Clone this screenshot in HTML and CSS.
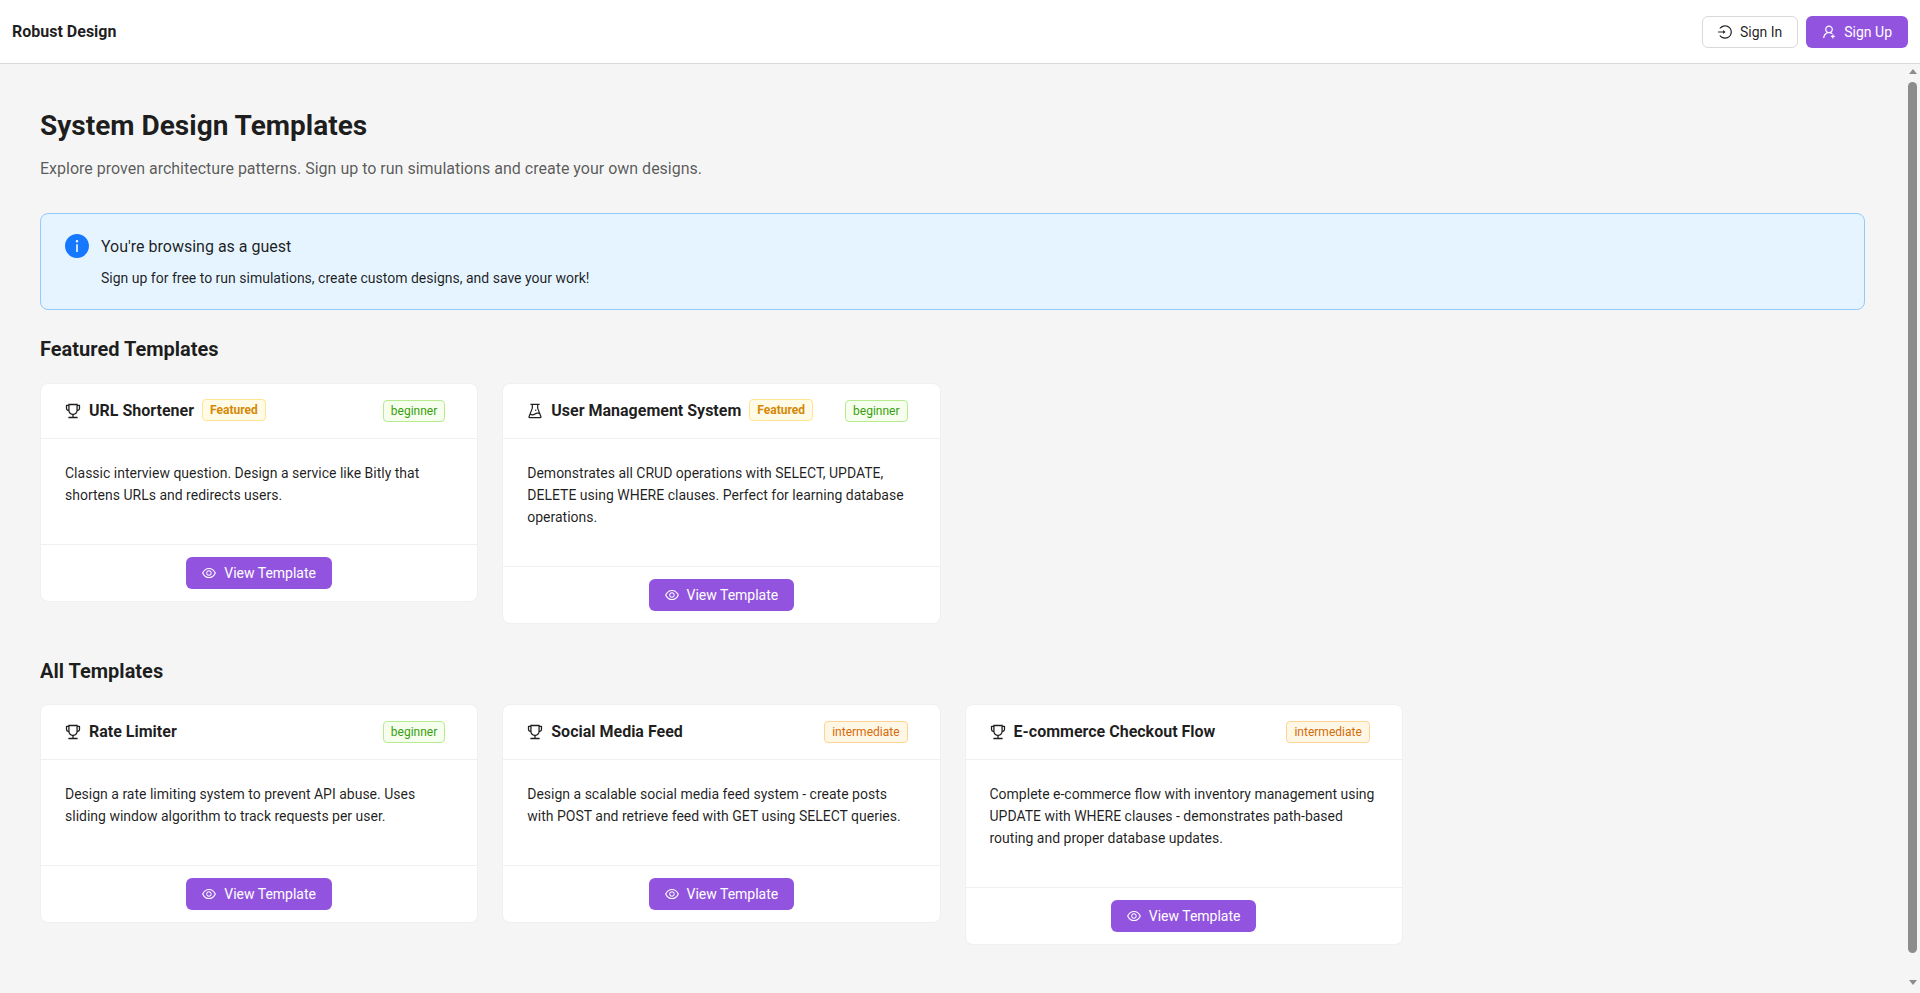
FILE: index.html
```html
<!DOCTYPE html>
<html lang="en">
<head>
<meta charset="utf-8">
<title>Robust Design</title>
<link rel="stylesheet" href="styles.css">
</head>
<body>
<svg class="sprite" aria-hidden="true">
  <symbol id="i-trophy" viewBox="64 64 896 896"><path d="M868 160h-92v-40c0-4.4-3.6-8-8-8H256c-4.4 0-8 3.6-8 8v40h-92a44 44 0 00-44 44v148c0 81.7 60 149.6 138.2 162C265.7 630.2 359 721.7 476 734.5v105.2H280c-17.7 0-32 14.3-32 32V904c0 4.4 3.6 8 8 8h512c4.4 0 8-3.6 8-8v-32.3c0-17.7-14.3-32-32-32H548V734.5C665 721.7 758.3 630.2 773.8 514 852 501.6 912 433.7 912 352V204a44 44 0 00-44-44zM184 352V232h64v207.6a91.99 91.99 0 01-64-87.6zm520 128c0 49.1-19.1 95.4-53.9 130.1-34.8 34.8-81 53.9-130.1 53.9h-16c-49.1 0-95.4-19.1-130.1-53.9-34.8-34.8-53.9-81-53.9-130.1V184h384v296zm136-128c0 41-26.9 75.8-64 87.6V232h64v120z"/></symbol>
  <symbol id="i-eye" viewBox="64 64 896 896"><path d="M942.2 486.2C847.4 286.5 704.1 186 512 186c-192.2 0-335.4 100.5-430.2 300.3a60.3 60.3 0 000 51.5C176.6 737.5 319.9 838 512 838c192.2 0 335.4-100.5 430.2-300.3 7.7-16.2 7.7-35 0-51.5zM512 766c-161.3 0-279.4-81.8-362.7-254C232.6 339.8 350.7 258 512 258c161.3 0 279.4 81.8 362.7 254C791.5 684.2 673.4 766 512 766zm-4-430c-97.2 0-176 78.8-176 176s78.8 176 176 176 176-78.8 176-176-78.8-176-176-176zm0 288c-61.9 0-112-50.1-112-112s50.1-112 112-112 112 50.1 112 112-50.1 112-112 112z"/></symbol>
  <symbol id="i-flask" viewBox="64 64 896 896"><path d="M512 472a40 40 0 1080 0 40 40 0 10-80 0zm367 352.9L696.3 352V178H768v-68H256v68h71.7v174L145 824.9c-2.8 7.4-4.3 15.2-4.3 23.1 0 35.3 28.7 64 64 64h614.6c7.9 0 15.7-1.5 23.1-4.3 33-12.7 49.4-49.8 36.6-82.8zM395.7 364.7V180h232.6v184.7L719.2 600c-20.7-5.3-42.1-8-63.9-8-61.2 0-119.2 21.5-165.3 60a188.78 188.78 0 01-121.3 43.9c-32.7 0-64.1-8.3-91.8-23.7l118.8-307.5zM210.5 844l41.7-107.8c35.7 18.1 75.4 27.8 116.6 27.8 61.2 0 119.2-21.5 165.3-60 33.9-28.2 76.3-43.9 121.3-43.9 35 0 68.4 9.5 97.6 27.1L813.5 844h-603z"/></symbol>
  <symbol id="i-login" viewBox="64 64 896 896"><path d="M521.7 82c-152.5-.4-286.7 78.5-363.4 197.7-3.4 5.3.4 12.3 6.7 12.3h70.3c4.8 0 9.3-2.1 12.3-5.8 7-8.5 14.5-16.7 22.4-24.5 32.6-32.5 70.5-58.1 112.7-75.9 43.6-18.4 90-27.8 137.9-27.8 47.9 0 94.3 9.3 137.9 27.8 42.2 17.8 80.1 43.4 112.7 75.9 32.6 32.5 58.1 70.4 76 112.5C865.7 417.8 875 464.1 875 512c0 47.9-9.4 94.2-27.8 137.8-17.8 42.1-43.4 80-76 112.5s-70.5 58.1-112.7 75.9A352.8 352.8 0 01520.6 866c-47.9 0-94.3-9.4-137.9-27.8A353.84 353.84 0 01270 762.3c-7.9-7.9-15.3-16.1-22.4-24.5-3-3.7-7.6-5.8-12.3-5.8H165c-6.3 0-10.2 7-6.7 12.3C234.9 863.2 368.5 942 520.6 942c236.2 0 428-190.1 430.4-425.6C953.4 277.1 761.3 82.6 521.7 82zM395.02 624v-76h-314c-4.4 0-8-3.6-8-8v-56c0-4.4 3.6-8 8-8h314v-76c0-6.7 7.8-10.5 13-6.3l141.9 112a8 8 0 010 12.6l-141.9 112c-5.2 4.1-13 .4-13-6.3z"/></symbol>
  <symbol id="i-useradd" viewBox="64 64 896 896"><path d="M678.3 642.4c24.5-13.2 52.5-20.7 82.3-20.7h.1c3 0 4.4-3.6 2.2-5.6a371.67 371.67 0 00-103.7-65.8c-.4-.2-.8-.3-1.2-.5C719.2 505 759.6 431.7 759.6 349c0-137-110.8-248-247.5-248S264.7 212 264.7 349c0 82.7 40.4 156 102.6 201.1-.4.2-.8.3-1.2.5-44.7 18.9-84.8 46-119.3 80.6a373.42 373.42 0 00-80.4 119.5A373.6 373.6 0 00137 888.8a8 8 0 008 8.2h59.9c4.3 0 7.9-3.5 8-7.8 2-77.2 32.9-149.5 87.6-204.3C357 628.2 432.2 597 512.2 597c56.7 0 111.1 15.7 158 45.1a8.1 8.1 0 008.1.3zM512.2 521c-45.8 0-88.9-17.9-121.4-50.4A171.2 171.2 0 01340.5 349c0-45.9 17.9-89.1 50.3-121.6S466.3 177 512.2 177s88.9 17.9 121.4 50.4A171.2 171.2 0 01683.9 349c0 45.9-17.9 89.1-50.3 121.6C601.1 503.1 558 521 512.2 521zM880 759h-84v-84c0-4.4-3.6-8-8-8h-56c-4.4 0-8 3.6-8 8v84h-84c-4.4 0-8 3.6-8 8v56c0 4.4 3.6 8 8 8h84v84c0 4.4 3.6 8 8 8h56c4.4 0 8-3.6 8-8v-84h84c4.4 0 8-3.6 8-8v-56c0-4.4-3.6-8-8-8z"/></symbol>
  <symbol id="i-info" viewBox="64 64 896 896"><path d="M512 64C264.6 64 64 264.6 64 512s200.6 448 448 448 448-200.6 448-448S759.4 64 512 64zm32 664c0 4.4-3.6 8-8 8h-48c-4.4 0-8-3.6-8-8V456c0-4.4 3.6-8 8-8h48c4.4 0 8 3.6 8 8v272zm-32-344a48.01 48.01 0 010-96 48.01 48.01 0 010 96z"/></symbol>
</svg>

<header class="topbar">
  <div class="brand">Robust Design</div>
  <nav class="auth">
    <a class="btn btn-default"><svg class="icon"><use href="#i-login"/></svg>Sign In</a>
    <a class="btn btn-primary"><svg class="icon"><use href="#i-useradd"/></svg>Sign Up</a>
  </nav>
</header>

<div class="viewport">
  <main class="content">
    <h1 class="page-title">System Design Templates</h1>
    <p class="page-sub">Explore proven architecture patterns. Sign up to run simulations and create your own designs.</p>

    <section class="alert">
      <svg class="alert-icon"><use href="#i-info"/></svg>
      <div class="alert-text">
        <div class="alert-title">You're browsing as a guest</div>
        <div class="alert-desc">Sign up for free to run simulations, create custom designs, and save your work!</div>
      </div>
    </section>

    <h2 class="section-title">Featured Templates</h2>
    <div class="grid grid-featured">
      <article class="card">
        <div class="card-head">
          <svg class="icon icon-title"><use href="#i-trophy"/></svg>
          <span class="card-title">URL Shortener</span>
          <span class="tag tag-featured">Featured</span>
          <span class="tag tag-beginner">beginner</span>
        </div>
        <div class="card-body"><p>Classic interview question. Design a service like Bitly that shortens URLs and redirects users.</p></div>
        <div class="card-foot"><a class="btn btn-primary"><svg class="icon"><use href="#i-eye"/></svg>View Template</a></div>
      </article>
      <article class="card">
        <div class="card-head">
          <svg class="icon icon-title"><use href="#i-flask"/></svg>
          <span class="card-title">User Management System</span>
          <span class="tag tag-featured">Featured</span>
          <span class="tag tag-beginner">beginner</span>
        </div>
        <div class="card-body"><p>Demonstrates all CRUD operations with SELECT, UPDATE, DELETE using WHERE clauses. Perfect for learning database operations.</p></div>
        <div class="card-foot"><a class="btn btn-primary"><svg class="icon"><use href="#i-eye"/></svg>View Template</a></div>
      </article>
    </div>

    <h2 class="section-title section-title-all">All Templates</h2>
    <div class="grid">
      <article class="card">
        <div class="card-head">
          <svg class="icon icon-title"><use href="#i-trophy"/></svg>
          <span class="card-title">Rate Limiter</span>
          <span class="tag tag-beginner">beginner</span>
        </div>
        <div class="card-body"><p>Design a rate limiting system to prevent API abuse. Uses sliding window algorithm to track requests per user.</p></div>
        <div class="card-foot"><a class="btn btn-primary"><svg class="icon"><use href="#i-eye"/></svg>View Template</a></div>
      </article>
      <article class="card">
        <div class="card-head">
          <svg class="icon icon-title"><use href="#i-trophy"/></svg>
          <span class="card-title">Social Media Feed</span>
          <span class="tag tag-intermediate">intermediate</span>
        </div>
        <div class="card-body"><p>Design a scalable social media feed system - create posts with POST and retrieve feed with GET using SELECT queries.</p></div>
        <div class="card-foot"><a class="btn btn-primary"><svg class="icon"><use href="#i-eye"/></svg>View Template</a></div>
      </article>
      <article class="card">
        <div class="card-head">
          <svg class="icon icon-title"><use href="#i-trophy"/></svg>
          <span class="card-title">E-commerce Checkout Flow</span>
          <span class="tag tag-intermediate">intermediate</span>
        </div>
        <div class="card-body"><p>Complete e-commerce flow with inventory management using UPDATE with WHERE clauses - demonstrates path-based routing and proper database updates.</p></div>
        <div class="card-foot"><a class="btn btn-primary"><svg class="icon"><use href="#i-eye"/></svg>View Template</a></div>
      </article>
    </div>
  </main>

  <div class="scrollbar" aria-hidden="true">
    <span class="scroll-arrow scroll-arrow-up"></span>
    <span class="scroll-thumb"></span>
    <span class="scroll-arrow scroll-arrow-down"></span>
  </div>
</div>
</body>
</html>
```

FILE: styles.css
```css
* { box-sizing: border-box; }

html, body {
  height: 100%;
  margin: 0;
  overflow: hidden;
}

body {
  display: flex;
  flex-direction: column;
  font-family: Roboto, "Liberation Sans", sans-serif;
  font-size: 14px;
  line-height: 22px;
  color: rgba(0, 0, 0, 0.88);
  background: #f5f5f5;
}

.sprite { display: none; }

.icon {
  width: 14px;
  height: 14px;
  fill: currentColor;
  flex: none;
}

.topbar {
  flex: none;
  height: 64px;
  display: flex;
  align-items: center;
  justify-content: space-between;
  padding: 0 12px;
  background: #fff;
  border-bottom: 1px solid #d9d9d9;
}

.brand {
  font-size: 16px;
  font-weight: 700;
}

.auth {
  display: flex;
  gap: 8px;
}

.btn {
  display: inline-flex;
  align-items: center;
  gap: 8px;
  height: 32px;
  padding: 0 15px;
  border: 1px solid transparent;
  border-radius: 6px;
  white-space: nowrap;
}

.btn-default {
  background: #fff;
  border-color: #d9d9d9;
  color: rgba(0, 0, 0, 0.88);
}

.btn-primary {
  background: #9254de;
  color: #fff;
}

.viewport {
  flex: 1;
  min-height: 0;
  display: flex;
}

.content {
  flex: 1;
  min-width: 0;
  overflow: hidden;
  padding: 44px 40px 0;
}

.page-title {
  margin: 0 0 13px;
  font-size: 28px;
  line-height: 36px;
  font-weight: 700;
}

.page-sub {
  margin: 0 0 32px;
  font-size: 16px;
  line-height: 24px;
  color: rgba(0, 0, 0, 0.65);
}

.alert {
  display: flex;
  gap: 12px;
  padding: 20px 24px;
  margin-bottom: 25px;
  background: #e6f4ff;
  border: 1px solid #91caff;
  border-radius: 8px;
}

.alert-icon {
  width: 24px;
  height: 24px;
  fill: #1677ff;
  flex: none;
}

.alert-text {
  padding-top: 1px;
}

.alert-title {
  font-size: 16px;
  line-height: 24px;
  margin-bottom: 8px;
}

.section-title {
  margin: 0 0 20px;
  font-size: 20px;
  line-height: 28px;
  font-weight: 700;
}

.section-title-all {
  margin-bottom: 19px;
}

.grid {
  display: grid;
  grid-template-columns: repeat(4, 1fr);
  gap: 24px;
  align-items: start;
}

.grid-featured {
  margin-bottom: 33px;
}

.card {
  background: #fff;
  border: 1px solid #f0f0f0;
  border-radius: 8px;
}

.card-head {
  display: flex;
  align-items: center;
  height: 55px;
  padding: 0 24px;
  border-bottom: 1px solid #f0f0f0;
}

.icon-title {
  width: 16px;
  height: 16px;
  margin-right: 8px;
}

.card-title {
  font-size: 16px;
  font-weight: 700;
  white-space: nowrap;
}

.tag {
  height: 22px;
  padding: 0 7px;
  border: 1px solid;
  border-radius: 4px;
  font-size: 12px;
  line-height: 20px;
  white-space: nowrap;
}

.tag-featured {
  margin: -2px 0 0 8px;
  font-weight: 700;
  color: #d48806;
  background: #fffbe6;
  border-color: #ffe58f;
}

.tag-beginner,
.tag-intermediate {
  margin-left: auto;
  margin-right: 8px;
}

.tag-beginner {
  color: #389e0d;
  background: #f6ffed;
  border-color: #b7eb8f;
}

.tag-intermediate {
  color: #d46b08;
  background: #fff7e6;
  border-color: #ffd591;
}

.card-body {
  padding: 23px 24px 24px;
}

.card-body p {
  margin: 0 0 14px;
}

.card-foot {
  display: flex;
  justify-content: center;
  padding: 12px 0;
  border-top: 1px solid #f0f0f0;
}

.scrollbar {
  flex: none;
  width: 15px;
  display: flex;
  flex-direction: column;
  align-items: center;
  background: #f5f5f5;
}

.scroll-arrow {
  flex: none;
  width: 0;
  height: 0;
  border-left: 4.5px solid transparent;
  border-right: 4.5px solid transparent;
}

.scroll-arrow-up {
  margin-top: 5px;
  border-bottom: 5px solid #8c8c8c;
}

.scroll-thumb {
  flex: none;
  width: 9px;
  height: 871px;
  margin-top: 8px;
  border-radius: 5px;
  background: #8c8c8c;
}

.scroll-arrow-down {
  margin-top: 27px;
  border-top: 5px solid #8c8c8c;
}
```
